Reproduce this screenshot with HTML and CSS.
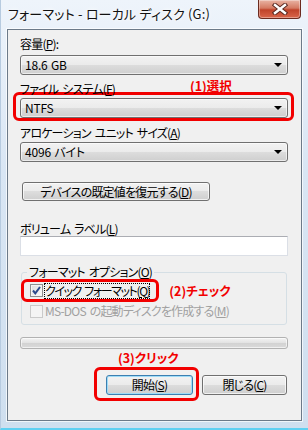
FILE: index.html
```html
<!DOCTYPE html>
<html>
<head>
  <meta charset="utf-8">
  <link rel="stylesheet" href="styles.css">
</head>
<body>
  <div class="window">
    <!-- Title bar -->
    <div class="titlebar">
      <span class="title">フォーマット - ローカル ディスク (G:)</span>
      <button class="close-btn" title="閉じる">
        <svg viewBox="0 0 16 12" width="16" height="12"><path d="M3 2l10 8M13 2L3 10" stroke="#5b2a22" stroke-width="4.4" stroke-linecap="square"/><path d="M3 2l10 8M13 2L3 10" stroke="#fff" stroke-width="2.4" stroke-linecap="square"/></svg>
      </button>
    </div>

    <!-- Dialog body -->
    <div class="client">
      <div class="label">容量(<u>P</u>):</div>
      <div class="combo"><span>18.6 GB</span><i class="arrow"></i></div>

      <div class="label-row">
        <span class="label">ファイル システム(<u>F</u>)</span>
        <span class="note note-1">(1)選択</span>
      </div>
      <div class="mark mark-fs">
        <div class="combo"><span>NTFS</span><i class="arrow"></i></div>
      </div>

      <div class="label label-alloc">アロケーション ユニット サイズ(<u>A</u>)</div>
      <div class="combo combo-alloc"><span>4096 バイト</span><i class="arrow"></i></div>

      <button class="btn btn-restore">デバイスの既定値を復元する(<u>D</u>)</button>

      <div class="label label-vol">ボリューム ラベル(<u>L</u>)</div>
      <input class="textbox" type="text">

      <fieldset class="group">
        <legend>フォーマット オプション(<u>O</u>)</legend>
        <div class="check-row">
          <div class="mark mark-quick">
            <span class="checkbox checked">
              <svg viewBox="0 0 9 9" width="9" height="9"><path d="M1 4.5l2.3 2.8L8 1" fill="none" stroke="#2c4a8c" stroke-width="2"/></svg>
            </span>
            <span class="check-label focused">クイック フォーマット(<u>Q</u>)</span>
          </div>
          <span class="note note-2">(2)チェック</span>
        </div>
        <div class="check-row disabled">
          <span class="checkbox"></span>
          <span class="check-label">MS-DOS の起動ディスクを作成する(<u>M</u>)</span>
        </div>
      </fieldset>

      <div class="progress"></div>

      <div class="note note-3">(3)クリック</div>
      <div class="actions">
        <div class="mark mark-start">
          <button class="btn btn-default">開始(<u>S</u>)</button>
        </div>
        <button class="btn btn-close">閉じる(<u>C</u>)</button>
      </div>
    </div>
  </div>
</body>
</html>
```

FILE: styles.css
```css
* { box-sizing: border-box; }
body {
  margin: 0;
  font-family: "Noto Sans CJK JP", "Noto Sans", sans-serif;
  font-size: 12px;
  font-feature-settings: "palt";
  color: #000;
}
.window {
  width: 308px;
  height: 430px;
  display: flex;
  flex-direction: column;
  padding: 0 6px 7px 6px;
  background: linear-gradient(#eef4fb, #d9e6f4 40%, #cfdfef);
  border-left: 1px solid #b7cbe0;
  border-bottom: 2px solid #5fd0f2;
}
.titlebar {
  height: 29px;
  display: flex;
  justify-content: space-between;
  align-items: flex-start;
}
.title {
  margin: 5px 0 0 1px;
  font-size: 13px;
  line-height: 17px;
  letter-spacing: 0.2px;
  color: #111;
  text-shadow: 0 0 6px #fff, 0 0 3px #fff;
}
.close-btn {
  width: 43px;
  height: 19px;
  margin-right: 1px;
  padding: 0;
  border: 1px solid #6b2b20;
  border-top: none;
  border-radius: 0 0 4px 4px;
  background: linear-gradient(#e9b4a4, #d47a62 45%, #c0432a 55%, #d9664b);
  box-shadow: inset 0 0 0 1px rgba(255, 255, 255, 0.35);
  display: flex;
  align-items: center;
  justify-content: center;
}
.client {
  flex: 1;
  background: #f0f0f0;
  border: 1px solid #6c7a89;
  box-shadow: 0 0 0 1px rgba(255, 255, 255, 0.7);
  padding: 6px 13px 0 12px;
  letter-spacing: -0.8px;
  word-spacing: 2px;
}
.label { line-height: 16px; }
u { text-decoration: underline; text-underline-offset: 1px; }

/* combo boxes */
.combo {
  height: 20px;
  margin-top: 3px;
  border: 1px solid #707070;
  border-radius: 3px;
  background: linear-gradient(#f2f2f2 0%, #ebebeb 50%, #dddddd 50%, #cfcfcf 100%);
  box-shadow: inset 0 0 0 1px rgba(255, 255, 255, 0.6);
  display: flex;
  align-items: center;
  justify-content: space-between;
  padding: 0 4px 0 4px;
  line-height: 16px;
  letter-spacing: -0.2px;
  word-spacing: 1px;
}
.arrow {
  width: 0;
  height: 0;
  border-left: 4px solid transparent;
  border-right: 4px solid transparent;
  border-top: 4px solid #000;
  margin-right: 1px;
}
.label-row {
  display: grid;
  grid-template-columns: 170px 1fr;
  margin-top: 6px;
  line-height: 16px;
}
.note {
  color: #f20000;
  font-weight: bold;
  font-size: 12.5px;
  line-height: 16px;
  letter-spacing: 0;
}
.note-1 { margin-top: -3px; }
.mark {
  border: 3px solid #f20000;
  border-radius: 6px;
}
.mark-fs {
  margin: -5px -6px 0 -7px;
  padding: 3px 3px 0 4px;
}
.mark-fs .combo { margin-top: 0; }
.label-alloc { margin-top: 4px; }
.combo-alloc { margin-top: 1px; }

/* push buttons */
.btn {
  font: inherit;
  font-feature-settings: "palt";
  letter-spacing: -0.8px;
  line-height: 16px;
  height: 20px;
  padding: 0;
  border: 1px solid #707070;
  border-radius: 3px;
  background: linear-gradient(#f2f2f2 0%, #ebebeb 50%, #dddddd 50%, #cfcfcf 100%);
  box-shadow: inset 0 0 0 1px rgba(255, 255, 255, 0.7);
  color: #000;
}
.btn-restore {
  display: block;
  height: 19px;
  width: 188px;
  margin: 20px 0 0 2px;
}
.label-vol { margin-top: 20px; }
.textbox {
  display: block;
  width: 100%;
  height: 20px;
  margin-top: -1px;
  border: 1px solid #dbdfe6;
  border-top-color: #abadb3;
  background: #fff;
}

/* group box */
.group {
  margin: 8px 1px 0 1px;
  padding: 0 0 5px 0;
  border: 1px solid #d5dfe5;
  border-radius: 3px;
}
.group legend {
  margin-left: 5px;
  padding: 0 2px;
  line-height: 16px;
}
.check-row {
  display: flex;
  align-items: center;
  line-height: 16px;
  white-space: nowrap;
}
.mark-quick {
  display: flex;
  align-items: center;
  height: 23px;
  margin: -1px 0 0 -1px;
  padding: 0 6px 0 6px;
}
.checkbox {
  width: 13px;
  height: 13px;
  border: 1px solid #8f8f8f;
  background: linear-gradient(135deg, #dcdcdc, #fbfbfb);
  box-shadow: inset 0 0 0 1px #f4f4f4;
  display: flex;
  align-items: center;
  justify-content: center;
  flex: none;
}
.check-label { margin-left: 2px; }
.focused {
  outline: 1px dotted #000;
  outline-offset: -1px;
  padding: 0 1px;
  margin-left: 1px;
  letter-spacing: -1.4px;
}
.note-2 { margin-left: 10px; }
.check-row.disabled {
  margin-top: 1px;
  padding-left: 8px;
  color: #a0a0a0;
}
.disabled .checkbox {
  border-color: #cacaca;
  background: #f4f4f4;
  box-shadow: none;
}

.progress {
  height: 12px;
  margin-top: 12px;
  border: 1px solid #b2b2b2;
  border-radius: 3px;
  background: linear-gradient(#f3f3f3, #e2e2e2 50%, #d2d2d2 51%, #dadada);
  box-shadow: inset 0 0 0 1px rgba(255, 255, 255, 0.6);
}
.note-3 { margin: 1px 0 0 98px; }
.actions {
  display: flex;
  justify-content: flex-end;
  align-items: flex-start;
  margin-top: 1px;
}
.mark-start {
  padding: 5px 3px 3px 9px;
}
.btn-default {
  width: 87px;
  border-color: #3c7fb1;
  box-shadow: inset 0 0 0 1px #9fdcf7;
}
.btn-close {
  width: 85px;
  margin: 8px 1px 0 3px;
}
```
